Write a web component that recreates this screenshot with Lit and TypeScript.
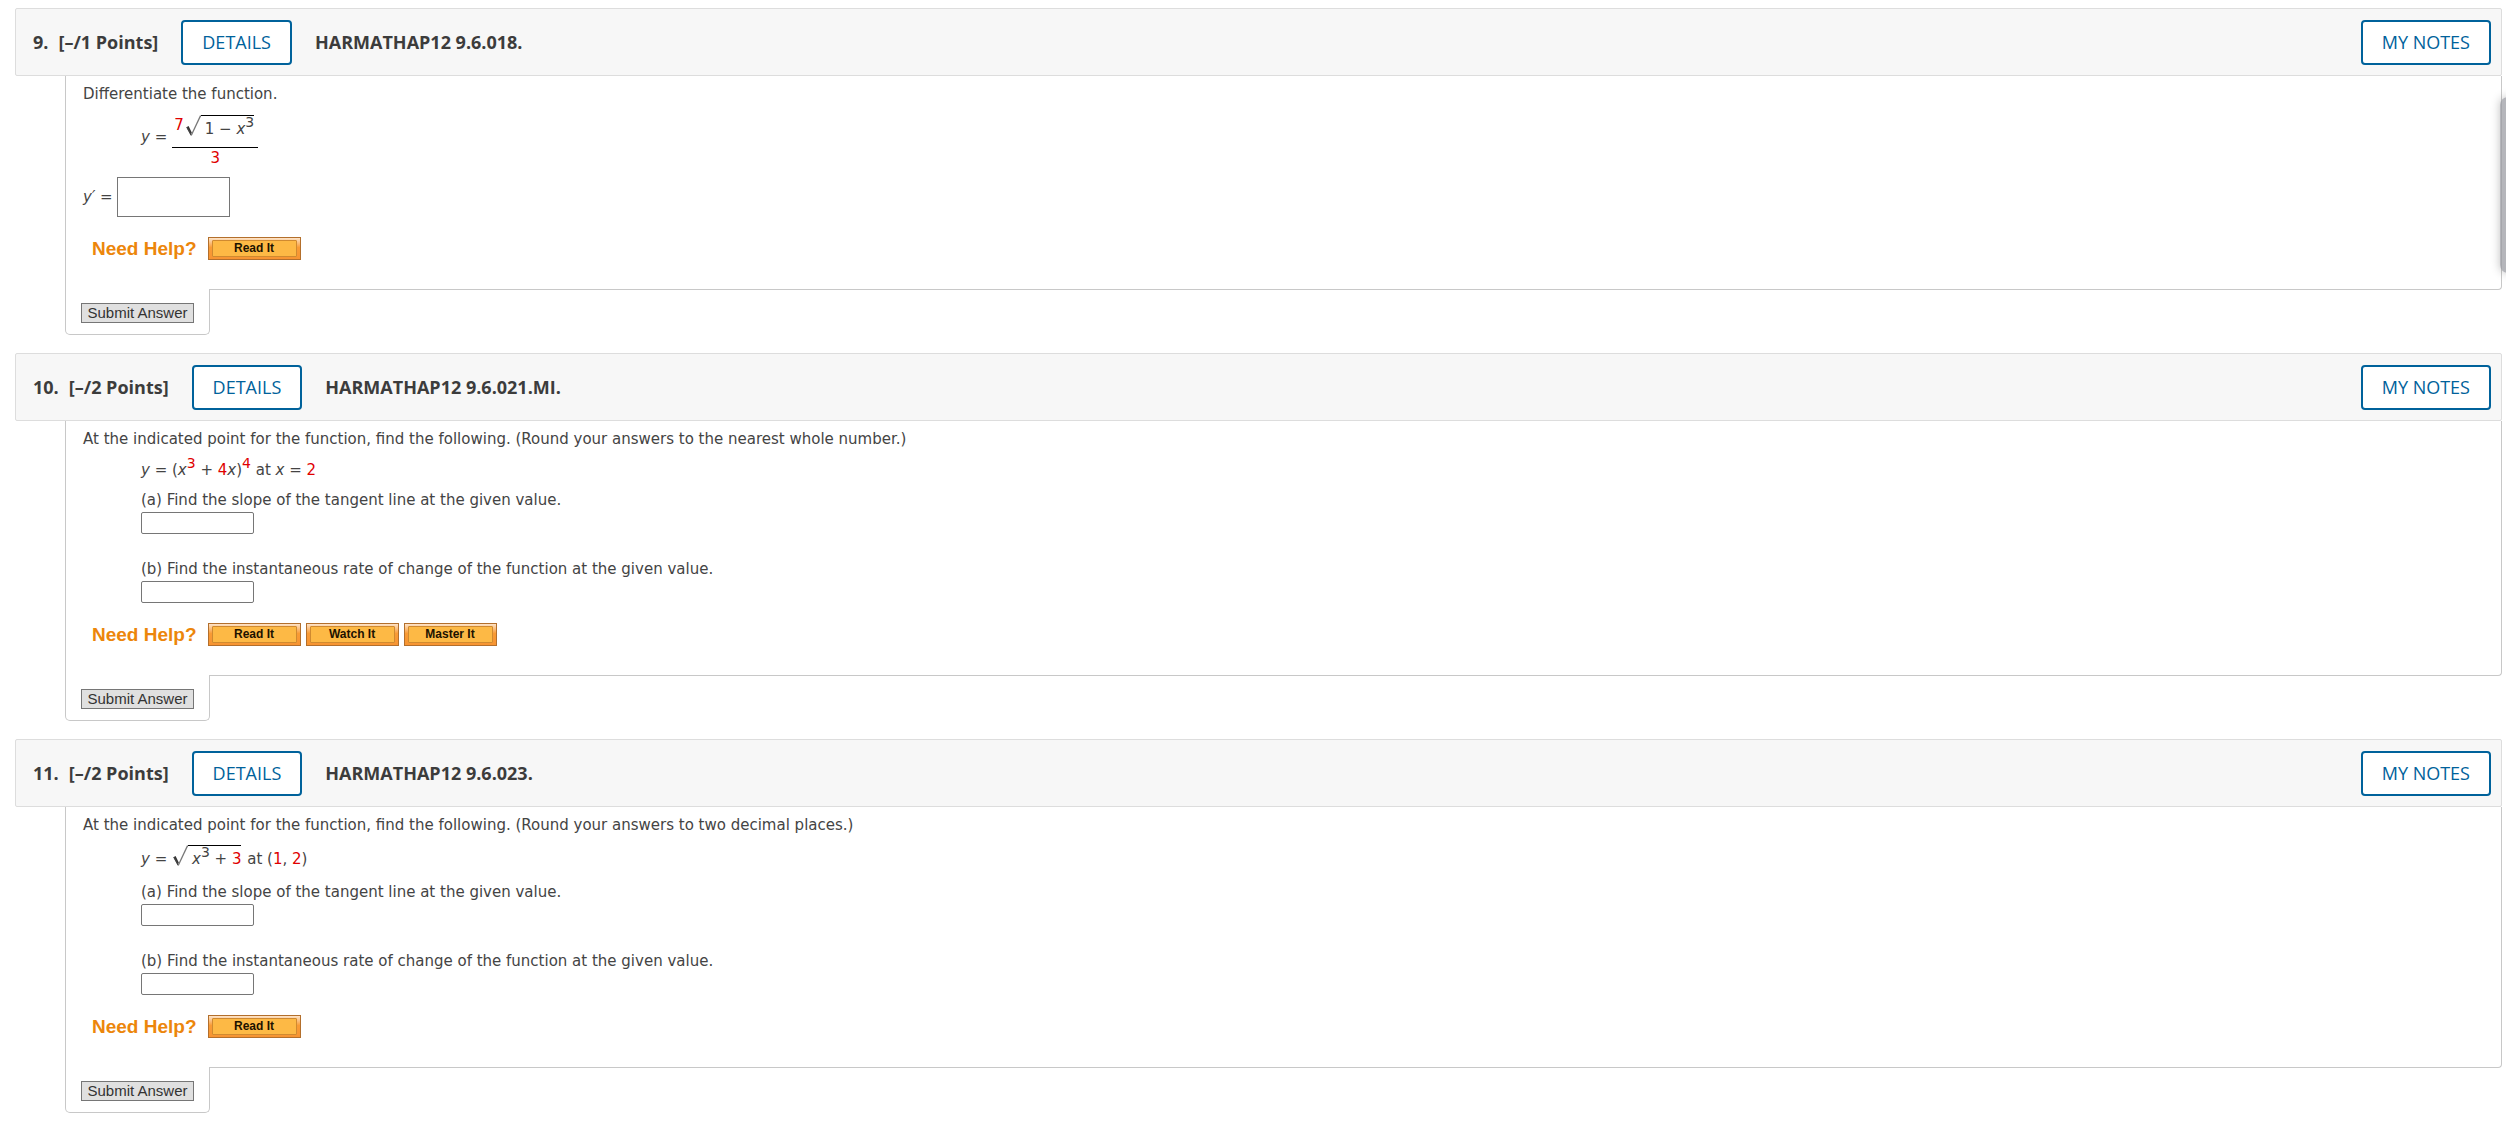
import { LitElement, html, css, svg, nothing, TemplateResult } from "lit";
import { customElement, property } from "lit/decorators.js";

interface Question {
  number: number;
  points: number;
  code: string;
  help: string[];
  body: TemplateResult;
}

const mathStyles = css`
  i {
    font-style: italic;
  }
  .num {
    color: #e00000;
  }
`;

@customElement("math-root")
export class MathRoot extends LitElement {
  static styles = css`
    :host {
      display: inline-flex;
      align-items: stretch;
    }
    .sign {
      width: 15px;
      height: 21px;
      flex: none;
    }
    .radicand {
      border-top: 1px solid #000;
      padding-left: 4px;
      line-height: 26px;
      white-space: pre;
    }
  `;

  render() {
    return html`<svg class="sign" viewBox="0 0 15 21" aria-hidden="true">
        ${svg`<path d="M0.6 12.2 L2.6 11 L5.6 17.2 L5 20.6 Z" fill="#333"/>
        <path d="M0.8 12 L5.2 20" fill="none" stroke="#444" stroke-width="1.4"/>
        <path d="M5.2 20.5 L14.6 0.5" fill="none" stroke="#777" stroke-width="1.3"/>`}
      </svg>
      <span class="radicand"><slot></slot></span>`;
  }
}

@customElement("question-card")
export class QuestionCard extends LitElement {
  @property({ attribute: false }) question!: Question;

  static styles = css`
    :host {
      display: block;
    }
    .header {
      display: flex;
      align-items: center;
      box-sizing: border-box;
      height: 68px;
      padding: 0 10px 0 17px;
      background: #f7f7f7;
      border: 1px solid #ddd;
      border-radius: 2px;
      font: 700 18px/24px "Open Sans", sans-serif;
      color: #3c3c3c;
    }
    .number {
      margin-right: 10px;
    }
    .outline {
      box-sizing: border-box;
      height: 45px;
      padding: 0 19px;
      background: #fff;
      border: 2px solid #00629b;
      border-radius: 4px;
      font: 500 18px/24px "Open Sans", sans-serif;
      color: #00629b;
      white-space: nowrap;
    }
    .details {
      margin: 0 23px;
    }
    .notes {
      margin-left: auto;
    }
    .content {
      display: flex;
      flex-direction: column;
      margin-left: 50px;
      border: 1px solid #c8c8c8;
      border-width: 0 1px 1px;
      border-radius: 0 0 4px 0;
      padding: 8px 17px 28px;
    }
    .help {
      display: flex;
      align-items: flex-start;
      gap: 5px;
      margin: 20px 0 0 9px;
    }
    .help-title {
      margin-right: 6px;
      font: bold 19px/24px "Liberation Sans", sans-serif;
      color: #ec860b;
    }
    .help-button {
      box-sizing: border-box;
      width: 93px;
      height: 23px;
      padding: 2px 3px;
      border: 1px solid #b36f2c;
      border-radius: 0;
      background: linear-gradient(#fde3c8, #f99b35 45%, #f79432);
      font: bold 12px/15px "Liberation Sans", sans-serif;
      color: #1c1200;
    }
    .face {
      display: block;
      border: 1px solid #d08a30;
      border-radius: 1px;
      background: #fdb945;
    }
    .footer {
      box-sizing: border-box;
      width: 145px;
      height: 46px;
      margin: -1px 0 0 50px;
      padding: 14px 15px 0;
      position: relative;
      background: #fff;
      border: 1px solid #c8c8c8;
      border-top: 0;
      border-radius: 0 0 5px 5px;
    }
    .submit {
      box-sizing: border-box;
      display: block;
      width: 113px;
      height: 20px;
      padding: 0;
      background: #e0e0e0;
      border: 1px solid #767676;
      border-radius: 0;
      font: 15px/18px "Liberation Sans", sans-serif;
      color: #333;
      white-space: nowrap;
    }
  `;

  render() {
    const q = this.question;
    if (!q) return nothing;
    return html`
      <header class="header">
        <span class="number">${q.number}.</span>
        <span>[–/${q.points} Points]</span>
        <button class="outline details">DETAILS</button>
        <span>${q.code}</span>
        <button class="outline notes">MY NOTES</button>
      </header>
      <div class="content">
        ${q.body}
        <div class="help">
          <span class="help-title">Need Help?</span>
          ${q.help.map(
            (h) => html`<button class="help-button"><span class="face">${h}</span></button>`
          )}
        </div>
      </div>
      <div class="footer"><button class="submit">Submit Answer</button></div>
    `;
  }
}

@customElement("question-body")
export class QuestionBody extends LitElement {
  @property({ type: String }) kind = "derivative";

  static styles = [
    mathStyles,
    css`
      :host {
        display: block;
        font: 15px/20px "DejaVu Sans", Verdana, sans-serif;
        color: #444;
      }
      .text {
        margin: 0;
      }
      .indent {
        display: flex;
        flex-direction: column;
        align-items: flex-start;
        padding-left: 58px;
      }
      .row {
        display: flex;
        align-items: center;
      }
      .quotient {
        gap: 5px;
        margin-top: 11px;
      }
      .lead {
        padding-bottom: 10px;
      }
      .fraction {
        display: flex;
        flex-direction: column;
        align-items: center;
      }
      .top {
        display: flex;
        gap: 2px;
        padding: 0 4px 5px 2px;
        border-bottom: 1px solid #000;
      }
      sup {
        font-size: 14px;
        line-height: 0;
        vertical-align: 7px;
      }
      .formula {
        white-space: pre;
      }
      .field {
        box-sizing: border-box;
        width: 113px;
        height: 22px;
        margin: 0;
        border: 1px solid #767676;
        border-radius: 2px;
        background: #fff;
        font: inherit;
      }
      .large {
        height: 40px;
        border-radius: 0;
      }
      .answer {
        gap: 4px;
        margin-top: 9px;
      }
      .part {
        display: flex;
        flex-direction: column;
        gap: 2px;
      }
      .part + .part {
        margin-top: 25px;
      }
      .power {
        margin: 11px 0 10px;
      }
      .radical {
        display: flex;
        align-items: center;
        gap: 1px;
        margin: 10px 0;
      }
    `,
  ];

  private parts() {
    return html`<label class="part"
        >(a) Find the slope of the tangent line at the given value.<input class="field" type="text"
      /></label>
      <label class="part"
        >(b) Find the instantaneous rate of change of the function at the given value.<input
          class="field"
          type="text"
      /></label>`;
  }

  render() {
    switch (this.kind) {
      case "power":
        return html`<p class="text">
            At the indicated point for the function, find the following. (Round your answers to the
            nearest whole number.)
          </p>
          <div class="indent">
            <div class="formula power"><i>y</i> = (<i>x</i><sup class="num">3</sup> + <span class="num">4</span><i>x</i>)<sup class="num">4</sup> at <i>x</i> = <span class="num">2</span></div>
            ${this.parts()}
          </div>`;
      case "radical":
        return html`<p class="text">
            At the indicated point for the function, find the following. (Round your answers to two
            decimal places.)
          </p>
          <div class="indent">
            <div class="formula radical"><span><i>y</i> = </span><math-root><i>x</i><sup>3</sup> + <span class="num">3</span></math-root><span> at (<span class="num">1</span>, <span class="num">2</span>)</span></div>
            ${this.parts()}
          </div>`;
      default:
        return html`<p class="text">Differentiate the function.</p>
          <div class="indent">
            <div class="row quotient">
              <span class="lead"><i>y</i> =</span>
              <span class="fraction">
                <span class="top"
                  ><span class="num">7</span><math-root>1 − <i>x</i><sup>3</sup></math-root></span
                >
                <span class="num">3</span>
              </span>
            </div>
          </div>
          <label class="row answer"
            ><span><i>y′</i> =</span><input class="field large" type="text"
          /></label>`;
    }
  }
}

const QUESTIONS: Question[] = [
  {
    number: 9,
    points: 1,
    code: "HARMATHAP12 9.6.018.",
    help: ["Read It"],
    body: html`<question-body kind="derivative"></question-body>`,
  },
  {
    number: 10,
    points: 2,
    code: "HARMATHAP12 9.6.021.MI.",
    help: ["Read It", "Watch It", "Master It"],
    body: html`<question-body kind="power"></question-body>`,
  },
  {
    number: 11,
    points: 2,
    code: "HARMATHAP12 9.6.023.",
    help: ["Read It"],
    body: html`<question-body kind="radical"></question-body>`,
  },
];

@customElement("app-root")
export class AppRoot extends LitElement {
  static styles = css`
    :host {
      display: block;
      background: #fff;
    }
    .page {
      position: relative;
      display: flex;
      flex-direction: column;
      gap: 18px;
      overflow: hidden;
      padding: 8px 4px 8px 15px;
    }
    .drawer {
      position: absolute;
      top: 97px;
      right: -10px;
      width: 16px;
      height: 176px;
      border-radius: 8px;
      background: rgba(150, 151, 158, 0.7);
      box-shadow: 0 0 10px rgba(0, 0, 0, 0.25);
    }
  `;

  render() {
    return html`<main class="page">
      ${QUESTIONS.map((q) => html`<question-card .question=${q}></question-card>`)}
      <div class="drawer"></div>
    </main>`;
  }
}
